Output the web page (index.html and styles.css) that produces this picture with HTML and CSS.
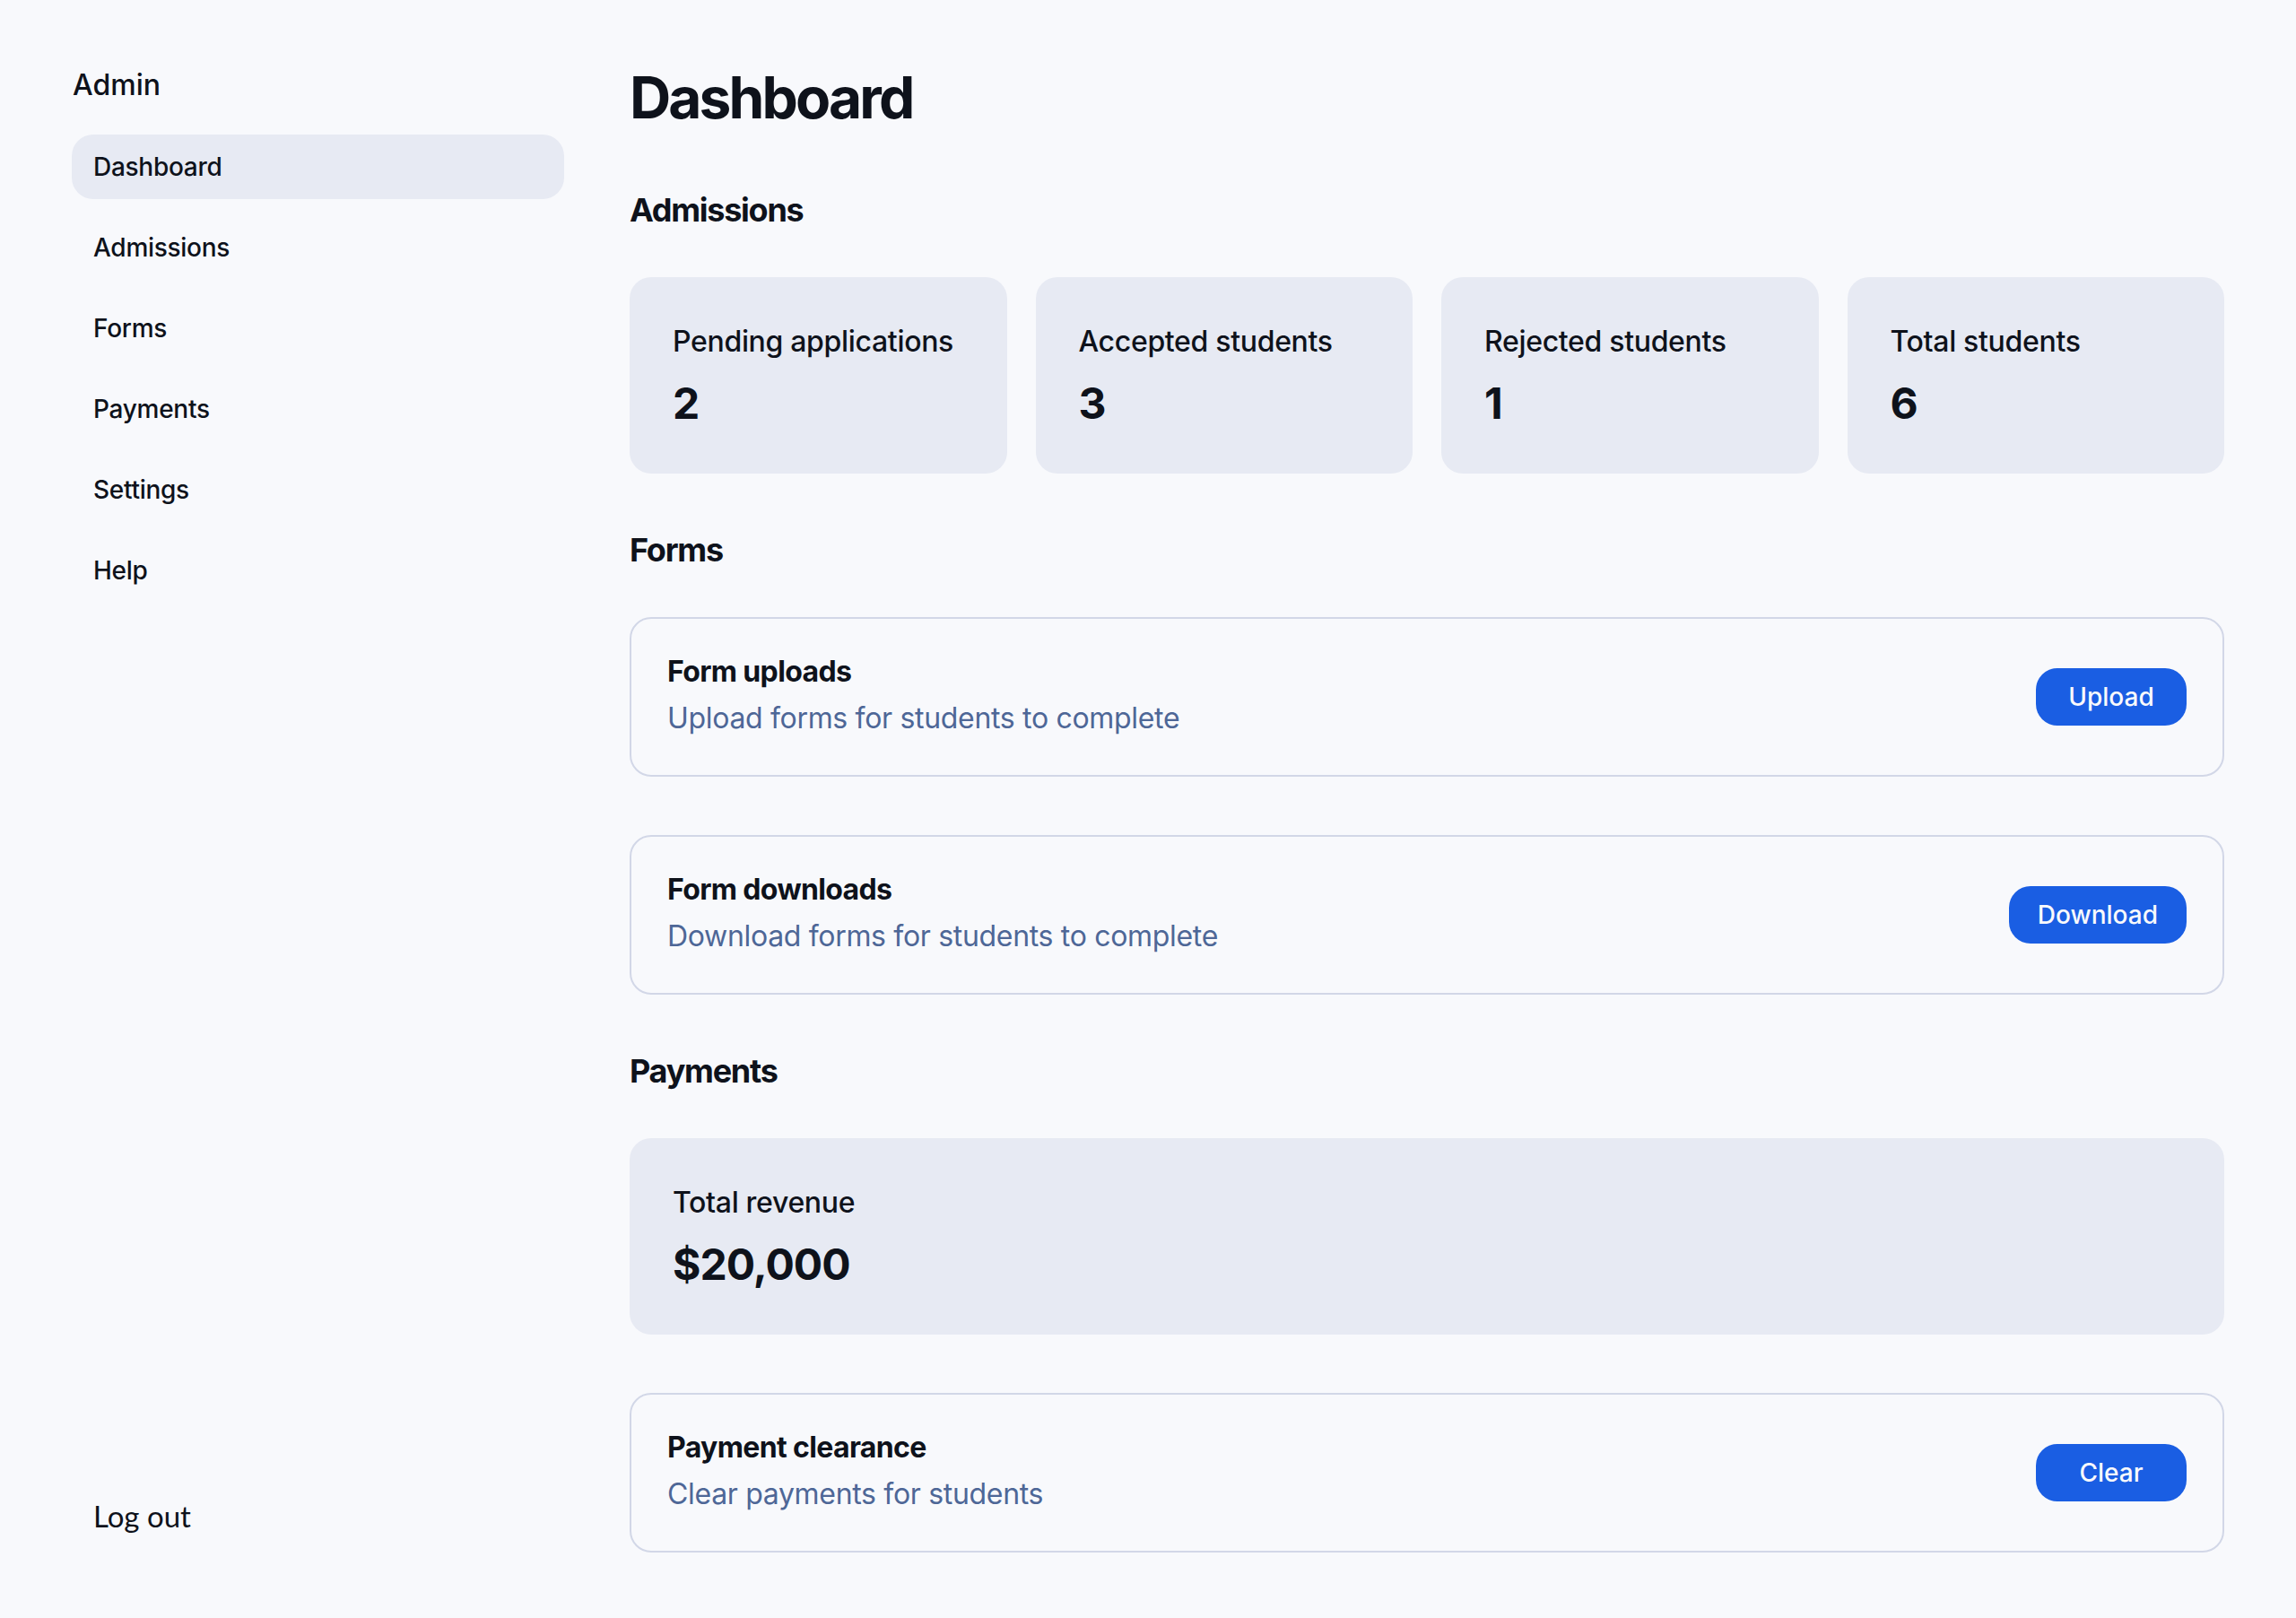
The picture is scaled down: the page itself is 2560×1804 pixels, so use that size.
FILE: index.html
```html
<!DOCTYPE html>
<html lang="en">
<head>
<meta charset="utf-8">
<title>Admin Dashboard</title>
<link rel="stylesheet" href="styles.css">
</head>
<body>
<div class="layout">
  <aside class="sidebar">
    <div class="side-top">
      <div class="brand">Admin</div>
      <nav class="nav">
        <a class="nav-item active">Dashboard</a>
        <a class="nav-item">Admissions</a>
        <a class="nav-item">Forms</a>
        <a class="nav-item">Payments</a>
        <a class="nav-item">Settings</a>
        <a class="nav-item">Help</a>
      </nav>
    </div>
    <div class="logout">Log out</div>
  </aside>
  <main class="main">
    <h1 class="page-title">Dashboard</h1>

    <h2 class="section-title">Admissions</h2>
    <div class="stats">
      <div class="stat-card"><p class="stat-label">Pending applications</p><p class="stat-value">2</p></div>
      <div class="stat-card"><p class="stat-label">Accepted students</p><p class="stat-value">3</p></div>
      <div class="stat-card"><p class="stat-label">Rejected students</p><p class="stat-value">1</p></div>
      <div class="stat-card"><p class="stat-label">Total students</p><p class="stat-value">6</p></div>
    </div>

    <h2 class="section-title">Forms</h2>
    <div class="action-card">
      <div class="action-text">
        <p class="action-title">Form uploads</p>
        <p class="action-desc">Upload forms for students to complete</p>
      </div>
      <button class="btn">Upload</button>
    </div>
    <div class="action-card spaced">
      <div class="action-text">
        <p class="action-title">Form downloads</p>
        <p class="action-desc">Download forms for students to complete</p>
      </div>
      <button class="btn">Download</button>
    </div>

    <h2 class="section-title">Payments</h2>
    <div class="stat-card">
      <p class="stat-label">Total revenue</p>
      <p class="stat-value">$20,000</p>
    </div>
    <div class="action-card spaced">
      <div class="action-text">
        <p class="action-title">Payment clearance</p>
        <p class="action-desc">Clear payments for students</p>
      </div>
      <button class="btn">Clear</button>
    </div>
  </main>
</div>
</body>
</html>
```

FILE: styles.css
```css
html, body {
  margin: 0;
  padding: 0;
  background: #f8f9fc;
}

body {
  font-family: Inter, "Noto Sans", "Liberation Sans", sans-serif;
  color: #0e121b;
}

p, h1, h2 {
  margin: 0;
}

.layout {
  display: flex;
  gap: 73px;
  padding: 0 80px;
  min-height: 1804px;
  box-sizing: border-box;
}

.sidebar {
  width: 549px;
  flex-shrink: 0;
  height: 1804px;
  box-sizing: border-box;
  padding: 71px 0 90px;
  display: flex;
  flex-direction: column;
  justify-content: space-between;
}

.brand {
  font-size: 32px;
  line-height: 48px;
  font-weight: 500;
  padding-left: 1px;
  margin-bottom: 31px;
}

.nav {
  display: flex;
  flex-direction: column;
  gap: 18px;
}

.nav-item {
  display: flex;
  align-items: center;
  height: 72px;
  padding: 0 24px;
  border-radius: 24px;
  font-size: 28px;
  line-height: 40px;
  font-weight: 500;
  color: #0e121b;
  letter-spacing: -0.01em;
}

.nav-item.active {
  background: #e7eaf3;
}

.logout {
  font-family: Lato, "Noto Sans", sans-serif;
  font-size: 33px;
  line-height: 48px;
  padding-left: 24px;
  color: #0e121b;
}

.main {
  flex: 1;
  min-width: 0;
  padding-top: 69px;
  display: flex;
  flex-direction: column;
}

.page-title {
  font-size: 64px;
  line-height: 80px;
  font-weight: 700;
  letter-spacing: -0.045em;
}

.section-title {
  font-size: 36px;
  line-height: 45px;
  font-weight: 700;
  letter-spacing: -0.035em;
  margin: 63px 0 52px;
}

.stats {
  display: grid;
  grid-template-columns: repeat(4, 1fr);
  gap: 32px;
}

.stat-card {
  background: #e7eaf3;
  border-radius: 24px;
  padding: 48px;
  display: flex;
  flex-direction: column;
  gap: 15px;
}

.stat-label {
  font-size: 32px;
  line-height: 48px;
  font-weight: 500;
  letter-spacing: -0.01em;
}

.stat-value {
  font-size: 48px;
  line-height: 60px;
  font-weight: 700;
  letter-spacing: -0.02em;
}

.action-card {
  display: flex;
  align-items: center;
  justify-content: space-between;
  gap: 32px;
  border: 2px solid #d2d7e7;
  border-radius: 24px;
  padding: 39px 40px;
}

.action-card.spaced {
  margin-top: 65px;
}

.action-text {
  display: flex;
  flex-direction: column;
  gap: 8px;
}

.action-title {
  font-size: 32px;
  line-height: 40px;
  font-weight: 700;
  letter-spacing: -0.02em;
}

.action-desc {
  font-size: 32px;
  line-height: 48px;
  font-weight: 400;
  color: #4e6797;
  letter-spacing: -0.01em;
}

.btn {
  min-width: 168px;
  height: 64px;
  padding: 0 32px;
  border: none;
  border-radius: 24px;
  background: #1a5ee3;
  color: #f8f9fc;
  font-family: Inter, "Noto Sans", sans-serif;
  font-size: 28px;
  font-weight: 500;
  line-height: 40px;
}
```
